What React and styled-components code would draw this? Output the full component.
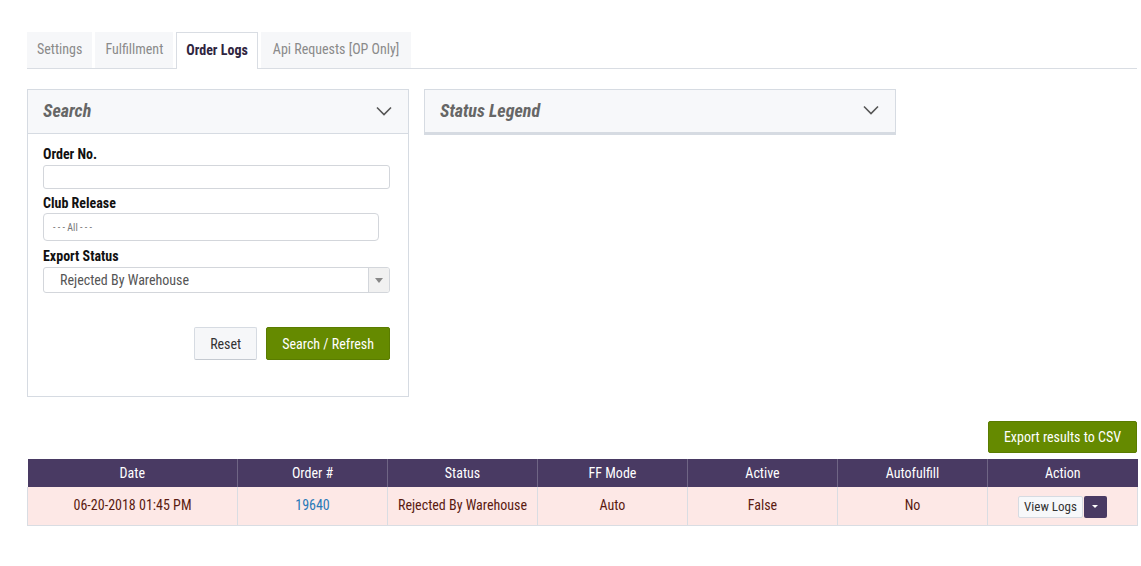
import styled, { createGlobalStyle } from 'styled-components';

const GlobalStyle = createGlobalStyle`
   body {
      margin: 0;
      background: #ffffff;
      font-family: "Roboto Condensed", "Liberation Sans Narrow", "DejaVu Sans Condensed", sans-serif;
      font-size: 14px;
      color: #222;
   }
`;

const Page = styled.div`
   padding: 32px 4px 0 27px;
   width: 1110px;
`;

const TabBar = styled.div`
   display: flex;
   gap: 3px;
   border-bottom: 1px solid #d9dde3;
   height: 36px;
`;

const Tab = styled.div`
   display: flex;
   align-items: center;
   padding: 0 ${(p) => p.$pad || 9}px 3px;
   font-size: 14px;
   color: ${(p) => (p.$active ? '#2f2540' : '#8a8a8a')};
   font-weight: ${(p) => (p.$active ? 700 : 400)};
   background: ${(p) => (p.$active ? '#ffffff' : '#f6f7f9')};
   border: 1px solid ${(p) => (p.$active ? '#d9dde3' : 'transparent')};
   border-bottom: none;
   margin-bottom: ${(p) => (p.$active ? '-1px' : '0')};
   height: ${(p) => (p.$active ? '37px' : '36px')};
   box-sizing: border-box;
`;

const PanelRow = styled.div`
   display: flex;
   align-items: flex-start;
   gap: 15px;
   margin-top: 20px;
`;

const Panel = styled.div`
   width: ${(p) => p.$width}px;
   border: 1px solid #d6dbe2;
   box-sizing: border-box;
   background: #fff;
`;

const PanelHeader = styled.div`
   display: flex;
   align-items: center;
   justify-content: space-between;
   height: 44px;
   padding: 0 16px 2px 15px;
   background: #f7f8fa;
   border-bottom: ${(p) => (p.$collapsed ? '2px solid #d6dbe2' : '1px solid #d6dbe2')};
   box-sizing: border-box;
`;

const PanelTitle = styled.span`
   font-size: 18px;
   font-weight: 700;
   font-style: italic;
   color: #666;
`;

const PanelBody = styled.div`
   padding: 12px 18px 36px 15px;
`;

const Label = styled.div`
   font-weight: 700;
   font-size: 14px;
   color: #111;
   line-height: 17px;
`;

const TextInput = styled.div`
   height: 24px;
   width: ${(p) => p.$width}px;
   border: 1px solid #d3d6db;
   border-radius: 3px;
   box-sizing: border-box;
   margin: 2px 0 6px;
`;

const Combo = styled.div`
   display: flex;
   align-items: center;
   height: 28px;
   width: 336px;
   border: 1px solid #d3d6db;
   border-radius: 4px;
   box-sizing: border-box;
   padding-left: 9px;
   font-size: 10px;
   color: #777;
   margin: 1px 0 7px;
`;

const Select = styled.div`
   display: flex;
   align-items: center;
   justify-content: space-between;
   height: 26px;
   width: 347px;
   border: 1px solid #d3d6db;
   border-radius: 3px;
   box-sizing: border-box;
   font-size: 14px;
   color: #555;
   margin-top: 2px;
   overflow: hidden;
`;

const SelectText = styled.span`
   padding-left: 16px;
`;

const SelectArrow = styled.div`
   width: 20px;
   height: 100%;
   background: #f1f1f1;
   border-left: 1px solid #d3d6db;
   display: flex;
   align-items: center;
   justify-content: center;
   &::after {
      content: '';
      border-left: 4px solid transparent;
      border-right: 4px solid transparent;
      border-top: 5px solid #888;
   }
`;

const ButtonRow = styled.div`
   display: flex;
   justify-content: flex-end;
   gap: 9px;
   margin-top: 34px;
`;

const Button = styled.button`
   font-family: inherit;
   font-size: 14px;
   height: ${(p) => p.$height || 33}px;
   padding: 0 ${(p) => p.$pad || 15}px;
   border-radius: 2px;
   cursor: pointer;
   color: ${(p) => (p.$primary ? '#fff' : '#333')};
   background: ${(p) => (p.$primary ? '#658a00' : '#f6f7f9')};
   border: 1px solid ${(p) => (p.$primary ? '#5a7c00' : '#d6dbe2')};
   border-bottom: 1px solid ${(p) => (p.$primary ? '#5a7c00' : '#c5cad1')};
`;

const ExportRow = styled.div`
   display: flex;
   justify-content: flex-end;
   margin-top: 24px;
`;

const Table = styled.table`
   width: 100%;
   border-collapse: collapse;
   margin-top: 6px;
   table-layout: fixed;
`;

const Th = styled.th`
   background: #493a63;
   color: #fff;
   font-weight: 400;
   font-size: 14px;
   height: 28px;
   padding: 0;
   border-left: 1px solid #6f6585;
   &:first-child {
      border-left: none;
   }
`;

const Td = styled.td`
   background: #fde8e6;
   color: ${(p) => p.$color || '#5a1a10'};
   font-size: 14px;
   text-align: center;
   height: 35px;
   padding: 0 0 3px;
   border: 1px solid #d9dde3;
   border-top: none;
`;

const ActionGroup = styled.div`
   display: inline-flex;
   align-items: center;
   gap: 1px;
   margin-top: 4px;
`;

const SmallButton = styled.button`
   font-family: inherit;
   font-size: 13px;
   color: #333;
   height: 22px;
   padding: 0 5px;
   background: #f7f8fa;
   border: 1px solid #d6dbe2;
   border-radius: 2px;
`;

const CaretButton = styled.button`
   width: 23px;
   height: 22px;
   background: #493a63;
   border: none;
   border-radius: 2px;
   display: flex;
   align-items: center;
   justify-content: center;
   &::after {
      content: '';
      border-left: 3px solid transparent;
      border-right: 3px solid transparent;
      border-top: 3px solid #fff;
   }
`;

const Chevron = () => (
   <svg width="16" height="10" viewBox="0 0 16 10">
      <path d="M1 1.5 L8 8.5 L15 1.5" fill="none" stroke="#555" strokeWidth="1.6" />
   </svg>
);

const widths = [210, 150, 150, 150, 150, 150, 150];
const headers = ['Date', 'Order #', 'Status', 'FF Mode', 'Active', 'Autofulfill', 'Action'];

export default function App() {
   return (
      <Page>
         <GlobalStyle />
         <TabBar>
            <Tab>Settings</Tab>
            <Tab>Fulfillment</Tab>
            <Tab $active>Order Logs</Tab>
            <Tab $pad={11}>Api Requests [OP Only]</Tab>
         </TabBar>
         <PanelRow>
            <Panel $width={382}>
               <PanelHeader>
                  <PanelTitle>Search</PanelTitle>
                  <Chevron />
               </PanelHeader>
               <PanelBody>
                  <Label>Order No.</Label>
                  <TextInput $width={347} />
                  <Label>Club Release</Label>
                  <Combo>- - - All - - -</Combo>
                  <Label>Export Status</Label>
                  <Select>
                     <SelectText>Rejected By Warehouse</SelectText>
                     <SelectArrow />
                  </Select>
                  <ButtonRow>
                     <Button>Reset</Button>
                     <Button $primary>Search / Refresh</Button>
                  </ButtonRow>
               </PanelBody>
            </Panel>
            <Panel $width={472}>
               <PanelHeader $collapsed>
                  <PanelTitle>Status Legend</PanelTitle>
                  <Chevron />
               </PanelHeader>
            </Panel>
         </PanelRow>
         <ExportRow>
            <Button $primary $height={32} $pad={15}>Export results to CSV</Button>
         </ExportRow>
         <Table>
            <colgroup>
               {widths.map((w, i) => (
                  <col key={i} style={{ width: w }} />
               ))}
            </colgroup>
            <thead>
               <tr>
                  {headers.map((h) => (
                     <Th key={h}>{h}</Th>
                  ))}
               </tr>
            </thead>
            <tbody>
               <tr>
                  <Td>06-20-2018 01:45 PM</Td>
                  <Td $color="#2a7ab8">19640</Td>
                  <Td>Rejected By Warehouse</Td>
                  <Td>Auto</Td>
                  <Td>False</Td>
                  <Td>No</Td>
                  <Td>
                     <ActionGroup>
                        <SmallButton>View Logs</SmallButton>
                        <CaretButton />
                     </ActionGroup>
                  </Td>
               </tr>
            </tbody>
         </Table>
      </Page>
   );
}
